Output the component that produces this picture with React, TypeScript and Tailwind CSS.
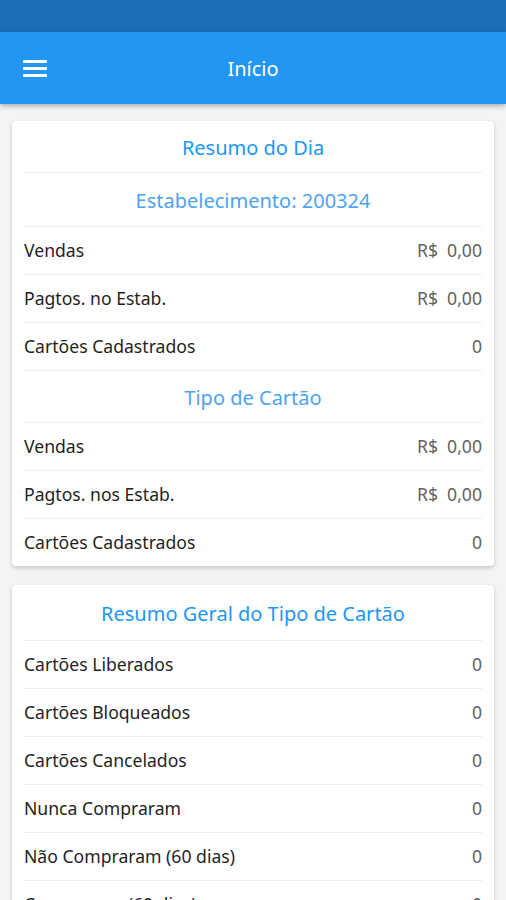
import React from "react";

type Row = { label: string; value: string };

function Divider() {
  return <div className="mx-3 h-px bg-[#ececec]" />;
}

function Heading({ text, light, h }: { text: string; light?: boolean; h: string }) {
  return (
    <div className={`flex items-center justify-center pt-[3px] ${h} ${light ? "text-[#4ea3ef]" : "text-[#2196f3]"} text-[20px]`}>
      {text}
    </div>
  );
}

function DataRow({ r }: { r: Row }) {
  return (
    <div className="flex h-[47px] items-center justify-between px-3 text-[17.6px]">
      <span className="text-[#1f1f1f]">{r.label}</span>
      <span className="whitespace-pre text-[#626262]">{r.value}</span>
    </div>
  );
}

export default function App() {
  const dia: Row[] = [
    { label: "Vendas", value: "R$  0,00" },
    { label: "Pagtos. no Estab.", value: "R$  0,00" },
    { label: "Cartões Cadastrados", value: "0" },
  ];
  const tipo: Row[] = [
    { label: "Vendas", value: "R$  0,00" },
    { label: "Pagtos. nos Estab.", value: "R$  0,00" },
    { label: "Cartões Cadastrados", value: "0" },
  ];
  const geral: Row[] = [
    { label: "Cartões Liberados", value: "0" },
    { label: "Cartões Bloqueados", value: "0" },
    { label: "Cartões Cancelados", value: "0" },
    { label: "Nunca Compraram", value: "0" },
    { label: "Não Compraram (60 dias)", value: "0" },
    { label: "Compraram (60 dias)", value: "0" },
  ];

  return (
    <div
      className="h-[900px] w-[506px] overflow-hidden bg-[#f4f4f4]"
      style={{ fontFamily: "'Noto Sans', Lato, sans-serif" }}
    >
      <div className="h-[32px] bg-[#1b6fb6]" />
      <div className="relative z-10 flex h-[72px] items-center bg-[#2196f3] shadow-[0_2px_5px_rgba(0,0,0,0.3)]">
        <div className="flex w-[70px] items-center pl-[23px]">
          <svg width="24" height="20" viewBox="0 0 24 20">
            <rect x="0" y="2" width="24" height="3" rx="1" fill="white" />
            <rect x="0" y="9" width="24" height="3" rx="1" fill="white" />
            <rect x="0" y="16" width="24" height="3" rx="1" fill="white" />
          </svg>
        </div>
        <div className="flex-1 pr-[70px] pt-[2px] text-center text-[20px] text-white">Início</div>
      </div>

      <div className="flex flex-col gap-[19px] px-3 pt-[17px]">
        <div className="rounded-[4px] bg-white shadow-[0_2px_4px_rgba(0,0,0,0.2)]">
          <Heading text="Resumo do Dia" h="h-[51px]" />
          <Divider />
          <Heading text="Estabelecimento: 200324" light h="h-[53px]" />
          {dia.map((r) => (
            <React.Fragment key={r.label}>
              <Divider />
              <DataRow r={r} />
            </React.Fragment>
          ))}
          <Divider />
          <Heading text="Tipo de Cartão" light h="h-[51px]" />
          {tipo.map((r, i) => (
            <React.Fragment key={r.label + i}>
              <Divider />
              <DataRow r={r} />
            </React.Fragment>
          ))}
        </div>

        <div className="rounded-[4px] bg-white shadow-[0_2px_4px_rgba(0,0,0,0.2)]">
          <Heading text="Resumo Geral do Tipo de Cartão" h="h-[55px]" />
          {geral.map((r) => (
            <React.Fragment key={r.label}>
              <Divider />
              <DataRow r={r} />
            </React.Fragment>
          ))}
        </div>
      </div>
    </div>
  );
}
